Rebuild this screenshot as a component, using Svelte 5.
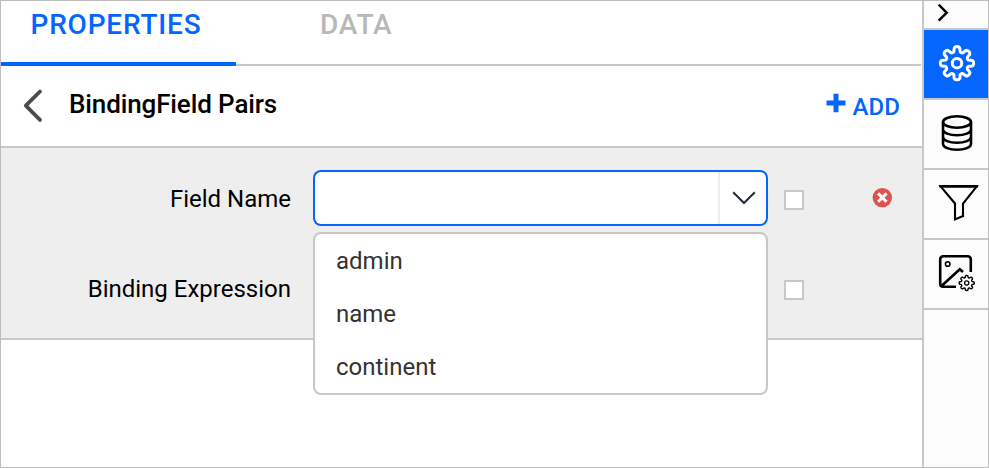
<script>
  const fields = ['admin', 'name', 'continent'];

  // Closed outline of an eight-toothed gear centred on (cx, cy).
  function gear(cx, cy, mid, amp) {
    const points = [];
    for (let i = 0; i < 192; i++) {
      const a = (i / 192) * Math.PI * 2;
      const r = mid + (amp * Math.tanh(1.4 * Math.cos(8 * a))) / Math.tanh(1.4);
      const t = a + 0.015 * Math.sin(8 * a) + 0.02 * Math.sin(16 * a);
      points.push(`${(cx + r * Math.sin(t)).toFixed(2)} ${(cy - r * Math.cos(t)).toFixed(2)}`);
    }
    return `M${points.join('L')}Z`;
  }
</script>

<div class="app">
  <main>
    <nav class="tabs">
      <button class="tab active"><span class="properties">PROPERTIES</span></button>
      <button class="tab"><span>DATA</span></button>
    </nav>

    <header>
      <svg class="back" width="22" height="34" viewBox="0 0 22 34"><path d="M19 4.5L4.8 18.7L19 32.9" /></svg>
      <h1>BindingField Pairs</h1>
      <button class="add">
        <svg width="20" height="20" viewBox="0 0 20 20"><path d="M7.5 0.7h5v6.8h7v5h-7v6.8h-5v-6.8h-7v-5h7z" /></svg>
        <span>ADD</span>
      </button>
    </header>

    <section>
      <div class="row">
        <label for="field">Field Name</label>
        <div class="combo">
          <input id="field" />
          <div class="arrow">
            <svg width="24" height="14" viewBox="0 0 24 14"><path d="M1.2 1.2L12 12L22.8 1.2" /></svg>
          </div>
          <ul class="menu">
            {#each fields as field}
              <li>{field}</li>
            {/each}
          </ul>
        </div>
        <span class="check"></span>
        <svg class="remove" width="20" height="20" viewBox="0 0 20 20">
          <circle cx="10.3" cy="9.6" r="9.7" />
          <path d="M6.1 5.4L14.5 13.8M14.5 5.4L6.1 13.8" />
        </svg>
      </div>
      <div class="row">
        <span class="label">Binding Expression</span>
        <div class="combo"></div>
        <span class="check"></span>
      </div>
    </section>
  </main>

  <aside>
    <div class="collapse">
      <svg width="64" height="27" viewBox="924 1 64 27"><path d="M938.7 4.7L946.7 12.7L938.7 20.7" stroke-width="2.4" /></svg>
    </div>
    <div class="tool selected">
      <svg width="64" height="68" viewBox="924 30 64 68">
        <path d={gear(957, 63.2, 14, 2.6)} stroke-width="3" stroke-linejoin="round" />
        <circle cx="957" cy="63.2" r="4.7" stroke-width="3" />
      </svg>
    </div>
    <div class="tool">
      <svg width="64" height="68" viewBox="924 100 64 68" stroke-width="2.6">
        <ellipse cx="957" cy="122" rx="14" ry="5.7" />
        <path d="M943 122V144C943 147.2 949.3 149.8 957 149.8S971 147.2 971 144V122M943 129.5C943 132.7 949.3 135.3 957 135.3S971 132.7 971 129.5M943 137C943 140.2 949.3 142.8 957 142.8S971 140.2 971 137" />
      </svg>
    </div>
    <div class="tool">
      <svg width="64" height="68" viewBox="924 170 64 68" stroke-width="2.1">
        <path d="M940.6 186.4H976.8L963 203.5V216L955 219.5V203.5Z" />
        <path d="M939.4 186.3H978" stroke-width="2.6" />
      </svg>
    </div>
    <div class="tool">
      <svg width="64" height="68" viewBox="924 240 64 68">
        <path d="M956 286.8H943.5Q940.2 286.8 940.2 283.5V259.5Q940.2 256.2 943.5 256.2H967.5Q970.8 256.2 970.8 259.5V272M941.5 286L959.8 269.3L963 272" stroke-width="2.6" />
        <circle cx="947.7" cy="264" r="2.3" stroke-width="1.6" />
        <path d={gear(966.7, 283, 6.5, 1)} stroke-width="1.4" />
        <circle cx="966.7" cy="283" r="2.1" stroke-width="1.3" />
      </svg>
    </div>
  </aside>
</div>

<style>
  :global(body) { margin: 0; }
  .app {
    box-sizing: border-box;
    width: 989px;
    height: 468px;
    border: 1px solid #bdbdbd;
    display: flex;
    background: #fff;
    color: #000;
    font-family: Roboto, sans-serif;
    overflow: hidden;
  }
  svg { display: block; fill: none; }
  button { border: 0; padding: 0; background: none; font: inherit; }
  main { width: 921px; }
  .tabs {
    box-sizing: border-box;
    height: 65px;
    width: 920px;
    display: flex;
    border-bottom: 2px solid #c8c8c8;
  }
  .tab {
    box-sizing: border-box;
    width: 235px;
    height: 65px;
    padding: 1px 0 18px 84px;
    text-align: left;
    font-size: 28px;
    font-weight: 500;
    line-height: 46px;
    letter-spacing: 0.8px;
    color: #b8b8b8;
  }
  .tab.active { padding-left: 29.5px; border-bottom: 4px solid #0565ff; padding-bottom: 14px; color: #0565ff; }
  header {
    box-sizing: border-box;
    height: 82px;
    padding: 0 22px 4px 20px;
    display: flex;
    align-items: center;
    border-bottom: 2px solid #c8c8c8;
  }
  .back { overflow: visible; stroke: #4c4c4c; stroke-width: 3.8; stroke-linecap: round; stroke-linejoin: round; }
  h1 { margin: 0 auto 1px 26px; font-size: 26px; font-weight: 500; line-height: 30px; letter-spacing: -0.12px; }
  .add { display: flex; gap: 6.5px; color: #0565ff; font-size: 24px; font-weight: 500; line-height: 28px; letter-spacing: 0.1px; }
  .add svg { fill: currentColor; margin-top: 5px; }
  .add span { margin-top: 5px; }
  section {
    box-sizing: border-box;
    height: 192px;
    padding-top: 5px;
    border-bottom: 2px solid #c8c8c8;
    background: #eee;
  }
  .row { height: 90px; display: flex; align-items: center; }
  label, .label { width: 290px; padding-top: 2px; text-align: right; font-size: 24px; line-height: 30px; }
  .combo { position: relative; width: 455px; margin-left: 22px; display: flex; }
  input {
    box-sizing: border-box;
    width: 405px;
    height: 56px;
    border: 2px solid #0565ff;
    border-right: 0;
    border-radius: 8px 0 0 8px;
    outline: 0;
    background: #fff;
  }
  .arrow {
    box-sizing: border-box;
    width: 50px;
    height: 56px;
    border: 2px solid #0565ff;
    border-left: 0;
    border-radius: 0 8px 8px 0;
    display: flex;
    align-items: center;
    justify-content: center;
    background: linear-gradient(90deg, #ededed 2px, #fff 2px);
  }
  .arrow svg { stroke: #252b3a; stroke-width: 2; margin-left: 4px; }
  .menu {
    box-sizing: border-box;
    position: absolute;
    z-index: 2;
    top: 62px;
    left: 0;
    width: 455px;
    height: 163px;
    margin: 0;
    padding: 1px 0 0 21px;
    border: 2px solid #c8c8c8;
    border-radius: 8px;
    background: #fff;
    list-style: none;
  }
  li { height: 53px; font-size: 24px; line-height: 53px; color: #333; }
  .check { box-sizing: border-box; width: 20px; height: 20px; margin: 4px 0 0 16px; border: 2px solid #c8c8c8; background: #fff; }
  .remove { margin: 0 0 0 68px; overflow: visible; }
  .remove circle { fill: #de524f; }
  .remove path { stroke: #fff; stroke-width: 3; }
  aside { width: 64px; border-left: 2px solid #c8c8c8; background: #fcfcfc; stroke: #000; }
  .collapse { height: 27px; border-bottom: 2px solid #c8c8c8; }
  .tool { height: 68px; border-bottom: 2px solid #c8c8c8; }
  .selected { background: #0565ff; stroke: #fff; }
</style>
